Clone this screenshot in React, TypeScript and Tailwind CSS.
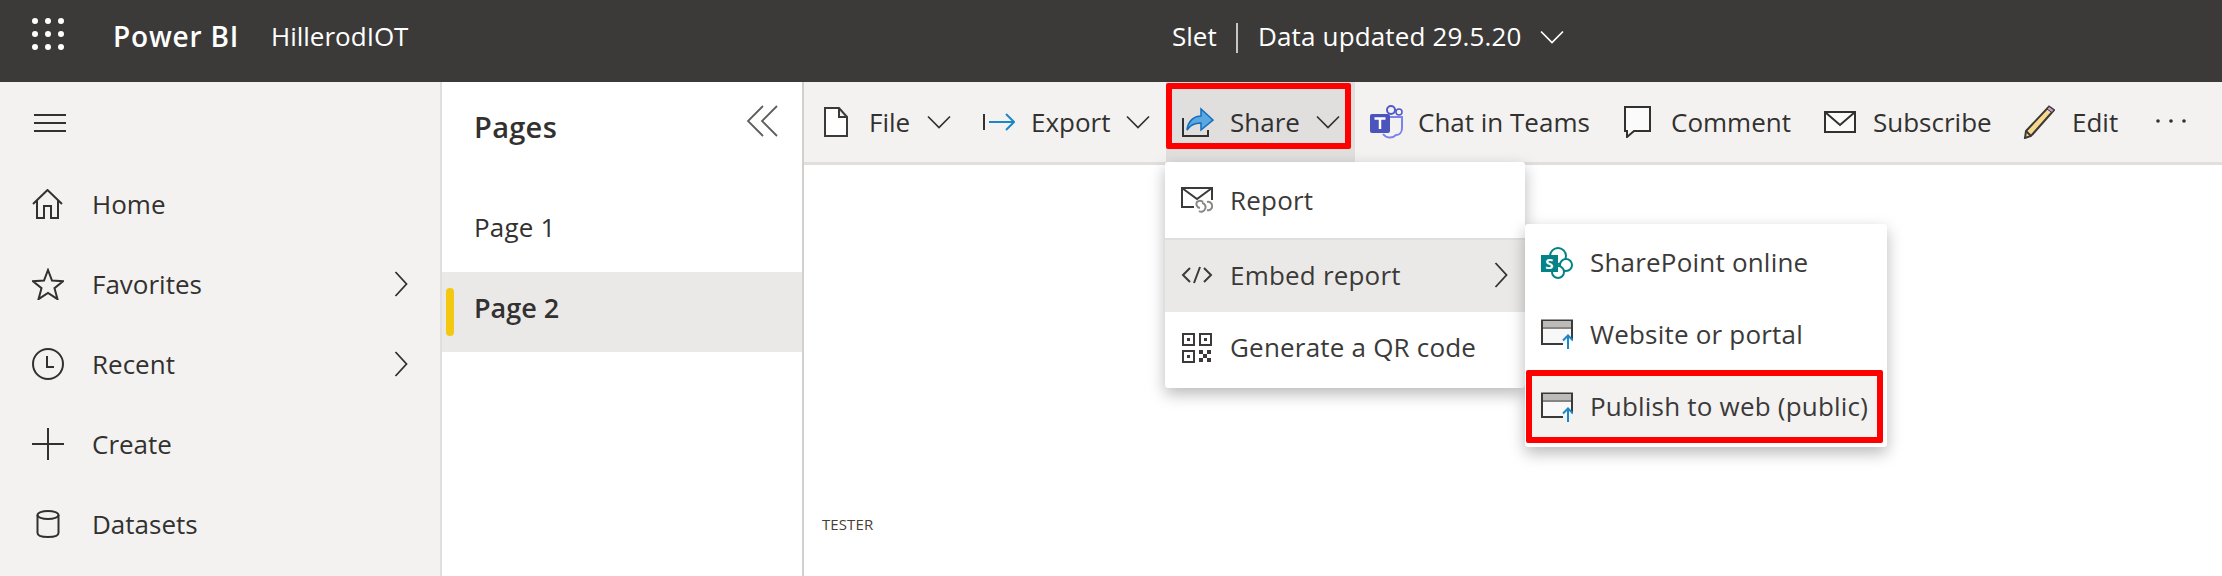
import React from "react";

const S = ({ w, h, vb, children, className = "" }: { w: number; h: number; vb?: string; children: React.ReactNode; className?: string }) => (
  <svg width={w} height={h} viewBox={vb ?? `0 0 ${w} ${h}`} fill="none" stroke="#323130" strokeWidth={2} className={`shrink-0 block ${className}`}>
    {children}
  </svg>
);

const Chev = ({ c = "#323130", w = 24 }: { c?: string; w?: number }) => (
  <S w={w} h={14} vb="0 0 24 14"><path d="M1 1.5 12 12.5 23 1.5" stroke={c} strokeWidth={1.7} /></S>
);
const ChevR = () => (
  <S w={14} h={26}><path d="M1.5 1 12.5 13 1.5 25" strokeWidth={1.8} /></S>
);

const Win = () => (
  <S w={32} h={30}>
    <path d="M31 21V1.5H1V25H22" strokeWidth={2} stroke="#3b3a39" fill="#f8f8f8" />
    <rect x="2" y="2" width="28" height="6" fill="#bdbbb9" stroke="none" />
    <path d="M1 9h30" stroke="#3b3a39" strokeWidth={1.2} />
    <path d="M27 30V17M22 21.5l5-5 5 5" stroke="#1b87c9" strokeWidth={2} />
  </S>
);

const NavRow = ({ icon, label, chev }: { icon: React.ReactNode; label: string; chev?: boolean }) => (
  <div className="flex items-center h-[80px] pl-[32px]">
    <div className="w-[60px] flex">{icon}</div>
    <span className="w-[302px] text-[26px]">{label}</span>
    {chev && <ChevR />}
  </div>
);

const Tool = ({ icon, label, w, iw, chev, gap = 0, className = "" }: { icon: React.ReactNode; label: string; w: number; iw: number; chev?: boolean; gap?: number; className?: string }) => (
  <div className={`flex items-center h-full ${className}`}>
    <div className="flex justify-start" style={{ width: iw }}>{icon}</div>
    <span className="whitespace-nowrap" style={{ width: w, marginRight: gap }}>{label}</span>
    {chev && <Chev />}
  </div>
);

const MenuItem = ({ icon, label, className = "", chev }: { icon: React.ReactNode; label: string; className?: string; chev?: boolean }) => (
  <div className={`flex items-center pl-[16px] ${className}`}>
    <div className="w-[49px] flex">{icon}</div>
    <span className="whitespace-nowrap flex-1">{label}</span>
    {chev && <div className="mr-[17px]"><ChevR /></div>}
  </div>
);

export default function App() {
  return (
    <div className="relative w-[2222px] h-[576px] overflow-hidden bg-white flex flex-col text-[#323130] font-['Open_Sans',sans-serif]">
      <header className="h-[82px] shrink-0 bg-[#3b3a39] text-white flex items-start pt-[18px]">
        <svg width={32} height={32} viewBox="0 0 32 32" fill="#fff" className="ml-[32px] shrink-0">
          {[3, 16, 29].flatMap((y) => [3, 16, 29].map((x) => <circle key={`${x}-${y}`} cx={x} cy={y} r={3} />))}
        </svg>
        <span className="ml-[49px] w-[158px] text-[28px] leading-[36px] font-semibold tracking-[0.8px] whitespace-nowrap">Power BI</span>
        <span className="w-[901px] text-[26px] leading-[36px] whitespace-nowrap">HillerodIOT</span>
        <span className="w-[64px] text-[26px] leading-[36px]">Slet</span>
        <span className="w-[2px] h-[30px] mt-[5px] bg-[#c8c6c4]" />
        <span className="ml-[20px] w-[280px] text-[26px] leading-[36px] tracking-[0.15px] whitespace-nowrap">Data updated 29.5.20</span>
        <div className="mt-[12px]"><Chev c="#fff" w={28} /></div>
      </header>

      <div className="flex flex-1 min-h-0">
        <aside className="w-[442px] shrink-0 bg-[#f3f2f1] border-r-2 border-[#e1dfdd] flex flex-col">
          <div className="h-[82px] pl-[34px] pt-[31px]">
            <S w={32} h={20}><path d="M0 2h32M0 10h32M0 18h32" strokeWidth={2} /></S>
          </div>
          <NavRow label="Home" icon={<S w={32} h={30} ><path d="M1 15 15.5 1 30 15M5 11v18h7V17h7v12h7V11" strokeWidth={2} /></S>} />
          <NavRow label="Favorites" chev icon={<S w={32} h={32}><path d="m16 2 4 10.5 11 .7-8.500 7 3 11L16 25l-9.500 6.200 3-11L1 13.200l11-.7z" strokeWidth={2} /></S>} />
          <NavRow label="Recent" chev icon={<S w={32} h={32}><circle cx={16} cy={16} r={15} /><path d="M15 8v11h7" /></S>} />
          <NavRow label="Create" icon={<S w={32} h={32}><path d="M0 16h32M16 0v32" /></S>} />
          <NavRow label="Datasets" icon={<S w={24} h={28} className="ml-[4px]"><ellipse cx={12} cy={5} rx={10.500} ry={4} /><path d="M1.500 5v18c0 2.500 4.500 4 10.500 4s10.500-1.500 10.500-4V5" /></S>} />
        </aside>

        <nav className="w-[362px] shrink-0 flex flex-col border-r-2 border-[#d2d0ce]">
          <div className="h-[83px] pl-[32px] flex items-center justify-between pr-[24px] pt-[7px]">
            <span className="text-[29px] font-semibold tracking-[0.3px]">Pages</span>
            <S w={32} h={32} className="mb-[12px]"><path d="M17 1 2 16l15 15M31 1 16 16l15 15" stroke="#605e5c" strokeWidth={1.800} /></S>
          </div>
          <div className="h-[107px] pl-[32px] pt-[18px] flex items-center text-[26px] tracking-[0.2px]">Page 1</div>
          <div className="h-[80px] bg-[#ebe9e7] flex items-center pl-[4px] pb-[8px]">
            <span className="w-[8px] h-[48px] rounded-full bg-[#f2c811] mt-[8px]" />
            <span className="ml-[20px] text-[27px] font-semibold">Page 2</span>
          </div>
        </nav>

        <main className="flex-1 flex flex-col min-w-0">
          <div className="h-[83px] shrink-0 bg-[#f3f2f1] border-b-[3px] border-[#e1dfdd] flex items-center text-[26px]">
            <Tool className="ml-[20px]" iw={45} w={57} gap={1} label="File" chev icon={<S w={24} h={30}><path d="M1 1h14l8 9v19H1zM15 1v9h8" stroke="#3b3a39" fill="#fff" strokeWidth={2} /></S>} />
            <Tool className="ml-[32px]" iw={48} w={94} gap={1} label="Export" chev icon={<S w={32} h={18}><path d="M1 1v16" strokeWidth={2} /><path d="M6 9h25M23 1l8 8-8 8" stroke="#1b87c9" strokeWidth={2} /></S>} />
            <div className="relative ml-[16px] h-full w-[189px] bg-[#e1dfdd] pl-[16px] shrink-0">
              <Tool iw={48} w={86} gap={0} label="Share" chev icon={
                <S w={32} h={30}>
                  <path d="M1 11v18h25v-6" strokeWidth={2} />
                  <path d="M5 23c1-9 7-14 14-14V2l12 11-12 10v-7c-6 0-11 2-14 7z" fill="#5ba7e0" stroke="#106ebe" strokeWidth={1.500} />
                </S>} />
              <div className="absolute left-0 top-[1px] w-[185px] h-[66px] border-[6px] border-[#ff0000] rounded-[2px]" />
            </div>
            <Tool className="ml-[15px]" iw={48} w={206} label="Chat in Teams" icon={
              <S w={33} h={34}>
                <circle cx={21} cy={5} r={4} fill="none" stroke="#5059c9" strokeWidth={2} />
                <circle cx={29} cy={7} r={3} fill="none" stroke="#5059c9" strokeWidth={1.500} />
                <path d="M12 12h20v11c0 5-3 7-6 7-4 4-10 3-13-1" fill="none" stroke="#7b83eb" strokeWidth={2} />
                <rect x={0} y={9} width={20} height={19} rx={2} fill="#4b53bc" stroke="none" />
                <path d="M4.500 13.500h11M10 13.500V24" stroke="#fff" strokeWidth={2.500} />
              </S>} />
            <Tool iw={47} w={153} label="Comment" icon={<S w={27} h={32}><path d="M1 1h25v24H10l-7 6v-6H1z" fill="#fbfbfb" strokeWidth={2} /></S>} />
            <Tool iw={49} w={150} label="Subscribe" icon={<S w={32} h={22}><rect x={1} y={1} width={30} height={20} fill="#fbfbfb" /><path d="m1 1 15 13L31 1" /></S>} />
            <Tool iw={49} w={84} label="Edit" icon={<S w={32} h={34}><path d="M26 1.500 31 5 8 31l-6 2 1-7z" fill="#f7d98b" stroke="#3b3a39" strokeWidth={2} /><path d="m24 4 5 3.500 2-2.500-5-3.500z" fill="#c59ad6" stroke="#3b3a39" strokeWidth={1} /><path d="m3 26 5 5" stroke="#3b3a39" /></S>} />
            <svg width={30} height={4} viewBox="0 0 30 4" fill="#323130" className="mb-[3px] shrink-0"><circle cx={2} cy={2} r={1.800} /><circle cx={15} cy={2} r={1.800} /><circle cx={28} cy={2} r={1.800} /></svg>
          </div>
          <div className="flex-1 pl-[18px] pt-[348px] text-[15px] tracking-[0.1px] text-[#4a4032]">TESTER</div>
        </main>
      </div>

      {/* Share menu */}
      <div className="absolute left-[1165px] top-[162px] w-[360px] h-[226px] bg-white rounded-[3px] shadow-[0_6px_16px_rgba(0,0,0,0.28)] flex flex-col text-[26px] tracking-[0.2px] text-[#3b3a39]">
        <MenuItem className="h-[76px]" label="Report" icon={
          <S w={32} h={26}>
            <path d="M13 20H1V1h30v12" stroke="#3b3a39" />
            <path d="m1 1 15 11L31 1" stroke="#3b3a39" />
            <path d="M22 15a4 4 0 0 0-6 0 4 4 0 0 0 3 6M21 16a4 4 0 0 1 3 6 4 4 0 0 1-6 2M26 15a4 4 0 0 1 5 3 4 4 0 0 1-5 5" stroke="#8a8886" strokeWidth={2} />
          </S>} />
        <MenuItem className="h-[74px] bg-[#ebe9e7] border-t-2 border-[#e1dfdd] pb-[2px]" chev label="Embed report" icon={
          <S w={32} h={18}><path d="M9 2 2 9l7 7M23 2l7 7-7 7M19 1l-6 16" stroke="#3b3a39" /></S>} />
        <MenuItem className="h-[76px] pb-[5px]" label="Generate a QR code" icon={
          <S w={30} h={30} className="ml-[1px]">
            <path d="M1 1h11v11H1zM18 1h11v11H18zM1 18h11v11H1z" strokeWidth={2} stroke="#3b3a39" />
            <path d="M5 5h3v3H5zM22 5h3v3h-3zM5 22h3v3H5z" fill="#3b3a39" stroke="none" />
            <path d="M17 17h4v4h-4zM25 17h4v4h-4zM21 21h4v4h-4zM17 25h4v4h-4zM25 25h4v4h-4z" fill="#3b3a39" stroke="none" />
          </S>} />
      </div>

      {/* Embed sub menu */}
      <div className="absolute left-[1525px] top-[224px] w-[362px] h-[223px] bg-white rounded-[3px] shadow-[0_6px_16px_rgba(0,0,0,0.28)] flex flex-col text-[26px] tracking-[0.2px] text-[#3b3a39] pt-[3px]">
        <MenuItem className="h-[71px] pl-[16px]" label="SharePoint online" icon={
          <svg width={32} height={32} viewBox="0 0 32 32" fill="none" className="shrink-0 block">
            <circle cx={17} cy={9} r={8} fill="#fff" stroke="#038387" strokeWidth={2} />
            <circle cx={25} cy={18} r={6} fill="#fff" stroke="#038387" strokeWidth={2} />
            <circle cx={17} cy={25} r={6} fill="#fff" stroke="#038387" strokeWidth={2} />
            <rect x={0} y={8} width={17} height={17} fill="#038387" />
            <text x={8.500} y={22} textAnchor="middle" fontSize={15} fontWeight={700} fill="#fff" fontFamily="'Open Sans',sans-serif">S</text>
          </svg>} />
        <MenuItem className="h-[72px] pl-[16px]" label="Website or portal" icon={<Win />} />
        <MenuItem className="h-[73px] ml-[1px] mr-[4px] bg-[#f3f2f1] border-[6px] border-[#ff0000] rounded-[2px] !pl-[9px]" label="Publish to web (public)" icon={<Win />} />
      </div>
    </div>
  );
}
